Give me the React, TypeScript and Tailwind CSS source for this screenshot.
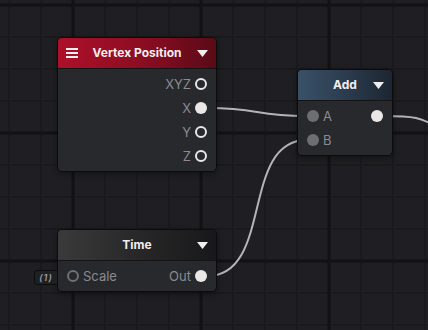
import React from "react";

type Port = "ring" | "fill" | "gray" | "grayring";

function PortDot({ kind }: { kind: Port }) {
  if (kind === "ring")
    return <span className="block w-3 h-3 rounded-full border-2 border-[#ebe7e7] shrink-0" />;
  if (kind === "fill")
    return <span className="block w-3 h-3 rounded-full bg-[#ebe7e7] shrink-0" />;
  if (kind === "grayring")
    return <span className="block w-3 h-3 rounded-full border-2 border-[#707073] shrink-0" />;
  return <span className="block w-3 h-3 rounded-full bg-[#6e6e71] shrink-0" />;
}

function Triangle() {
  return (
    <svg width="11" height="7" viewBox="0 0 11 7" className="block">
      <path d="M0 0 H11 L5.5 7 Z" fill="#f2eeee" />
    </svg>
  );
}

function Hamburger() {
  return (
    <svg width="12" height="10" viewBox="0 0 12 10" className="block">
      <rect x="0" y="0" width="12" height="2" fill="#f2eeee" />
      <rect x="0" y="4" width="12" height="2" fill="#f2eeee" />
      <rect x="0" y="8" width="12" height="2" fill="#f2eeee" />
    </svg>
  );
}

function Header({ title, menu, bg }: { title: string; menu?: boolean; bg: string }) {
  return (
    <div className={`h-[31px] grid grid-cols-[1fr_auto_1fr] items-center px-2 border-b border-[#141416] rounded-t-[4px] ${bg}`}>
      <div className="flex items-center">{menu ? <Hamburger /> : null}</div>
      <div className="text-[12px] font-bold text-[#f2eeee] leading-none">{title}</div>
      <div className="flex items-center justify-end">
        <Triangle />
      </div>
    </div>
  );
}

export default function App() {
  const vMinor: number[] = [];
  for (let x = 9; x < 428; x += 32) vMinor.push(x);
  const hMinor: number[] = [];
  for (let y = 5; y < 330; y += 32) hMinor.push(y);
  const vMajor = [73, 201, 329];
  const hMajor = [5, 133, 261];

  return (
    <div
      className="relative w-[428px] h-[330px] overflow-hidden bg-[#1f1f23]"
      style={{ fontFamily: "Inter, 'Noto Sans', sans-serif" }}
    >
      <svg className="absolute inset-0" width="428" height="330">
        {vMinor.map((x) => (
          <rect key={"v" + x} x={x - 1} y={0} width={2} height={330} fill="#1a1a1d" />
        ))}
        {hMinor.map((y) => (
          <rect key={"h" + y} x={0} y={y - 1} width={428} height={2} fill="#1a1a1d" />
        ))}
        {vMajor.map((x) => (
          <rect key={"V" + x} x={x - 1.5} y={0} width={3} height={330} fill="#121214" />
        ))}
        {hMajor.map((y) => (
          <rect key={"H" + y} x={0} y={y - 1.5} width={428} height={3} fill="#121214" />
        ))}
        <g fill="none" stroke="#b4b4b4" strokeWidth="2" strokeLinecap="round">
          <path d="M207 108 C262 108, 252 116, 307 116" />
          <path d="M207 276 C274 276, 240 140, 307 140" />
          <path d="M383 116 C418 116, 420 118, 440 128" />
        </g>
      </svg>

      {/* Vertex Position */}
      <div className="absolute left-[57px] top-[37px] w-[160px] rounded-[5px] border border-[#0c0c0d] bg-[#28292d] shadow-[0_2px_6px_rgba(0,0,0,0.4)]">
        <Header title="Vertex Position" menu bg="bg-[linear-gradient(90deg,#ad1029,#8a0d22_55%,#5a0a16)]" />
        <div className="py-[3px]">
          {[
            ["XYZ", "ring"],
            ["X", "fill"],
            ["Y", "ring"],
            ["Z", "ring"],
          ].map(([l, k]) => (
            <div key={l} className="h-6 flex items-center justify-end gap-1 px-[9px]">
              <span className="text-[13px] text-[#8b8b8f] leading-none">{l}</span>
              <PortDot kind={k as Port} />
            </div>
          ))}
        </div>
      </div>

      {/* Add */}
      <div className="absolute left-[297px] top-[69px] w-[96px] rounded-[5px] border border-[#0c0c0d] bg-[#28292d] shadow-[0_2px_6px_rgba(0,0,0,0.4)]">
        <Header title="Add" bg="bg-[linear-gradient(90deg,#3a5168,#2a3a4c_55%,#1c2631)]" />
        <div className="py-[3px]">
          <div className="h-6 flex items-center gap-1 px-[9px]">
            <PortDot kind="gray" />
            <span className="text-[13px] text-[#8b8b8f] leading-none flex-1">A</span>
            <PortDot kind="fill" />
          </div>
          <div className="h-6 flex items-center gap-1 px-[9px]">
            <PortDot kind="gray" />
            <span className="text-[13px] text-[#8b8b8f] leading-none">B</span>
          </div>
        </div>
      </div>

      {/* Time */}
      <div className="absolute left-[57px] top-[229px] w-[160px] rounded-[5px] border border-[#0c0c0d] bg-[#28292d] shadow-[0_2px_6px_rgba(0,0,0,0.4)]">
        <Header title="Time" bg="bg-[linear-gradient(90deg,#3a3a3b,#262627_55%,#18181a)]" />
        <div className="py-[3px]">
          <div className="h-6 flex items-center gap-1 px-[9px]">
            <PortDot kind="grayring" />
            <span className="text-[13px] text-[#8b8b8f] leading-none flex-1">Scale</span>
            <span className="text-[13px] text-[#8b8b8f] leading-none">Out</span>
            <PortDot kind="fill" />
          </div>
        </div>
      </div>

      {/* badge */}
      <div className="absolute left-[34px] top-[270px] w-[24px] h-[15px] rounded-l-[3px] border border-[#0c0c0d] bg-[#1f2023] flex items-center justify-center">
        <span className="text-[9px] italic font-semibold text-[#9c9ca0] tracking-[1px] leading-none">(1)</span>
      </div>
    </div>
  );
}
